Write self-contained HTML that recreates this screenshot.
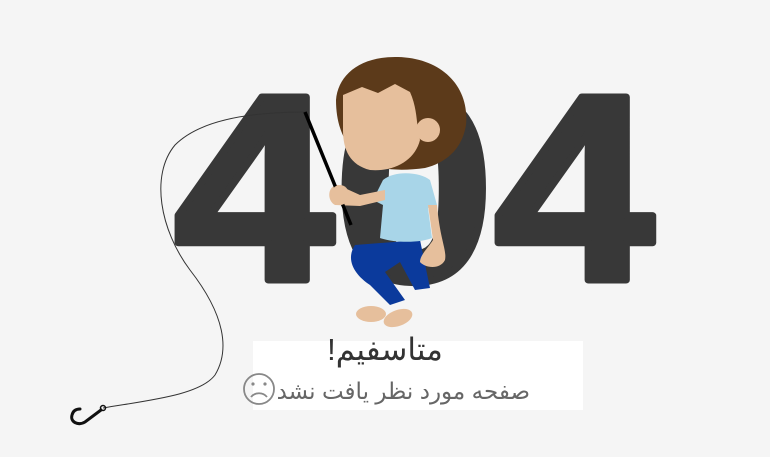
<!DOCTYPE html>
<html><head><meta charset="utf-8"><style>
html,body{margin:0;padding:0;background:#f5f5f5;width:770px;height:457px;overflow:hidden}
svg{display:block}
</style></head><body>
<svg width="770" height="457" viewBox="0 0 770 457" xmlns="http://www.w3.org/2000/svg">
<rect width="770" height="457" fill="#f5f5f5"/>
<text x="174" y="280" font-family="Liberation Sans, sans-serif" font-weight="bold" font-size="266" fill="#383838" stroke="#383838" stroke-width="7" stroke-linejoin="round" textLength="480" lengthAdjust="spacingAndGlyphs">404</text>
<!-- fishing line -->
<path d="M305,112 C250,112 200,120 175,145 C150,175 160,230 190,270 C225,315 230,350 215,375 C200,395 150,400 103,408" fill="none" stroke="#333" stroke-width="1"/>
<!-- hook -->
<circle cx="103" cy="408" r="2.5" fill="none" stroke="#111" stroke-width="1.5"/>
<path d="M101,410 L85,422 C78,426 70,422 72,415 C73,411 76,409 80,409" fill="none" stroke="#111" stroke-width="3" stroke-linecap="round"/>
<!-- legs -->
<path d="M355,245 C345,260 355,275 370,285 L390,305 L405,300 L385,272 L400,262 L415,290 L430,288 L420,240 Z" fill="#0b3a9c"/>
<ellipse cx="371" cy="314" rx="15" ry="8" fill="#e6bf9c"/>
<ellipse cx="398" cy="318" rx="15" ry="8" fill="#e6bf9c" transform="rotate(-20 398 318)"/>
<!-- shirt -->
<path d="M383,180 C395,170 420,172 430,180 L437,205 L428,208 L432,238 C420,243 395,243 380,238 L383,205 L373,200 Z" fill="#a8d5e8"/>
<!-- right arm -->
<path d="M428,205 L433,240 C428,248 420,255 420,262 C425,268 440,270 445,260 C447,250 440,240 437,205 Z" fill="#e6bf9c"/>
<!-- left arm -->
<path d="M385,190 L360,195 L338,185 C328,185 326,200 335,205 L360,206 L385,200 Z" fill="#e6bf9c"/>
<!-- head -->
<path d="M336,100 C338,75 360,56 398,57 C440,58 470,85 466,125 C462,150 445,163 425,168 C395,172 365,170 352,150 C344,140 336,125 336,100 Z" fill="#5c3a1a"/>
<path d="M343,95 L362,87 L378,93 L395,84 L410,92 C418,110 416,125 420,140 C415,160 395,172 370,170 C350,165 343,150 343,130 Z" fill="#e6bf9c"/>
<circle cx="428" cy="130" r="12" fill="#e6bf9c"/>
<!-- rod -->
<line x1="305" y1="112" x2="351" y2="225" stroke="#000" stroke-width="3.5"/>
<ellipse cx="340" cy="195" rx="9" ry="10" fill="#e6bf9c"/>
<!-- white box -->
<rect x="253" y="341" width="330" height="69" fill="#ffffff"/>
<text x="385" y="360" text-anchor="middle" font-family="Liberation Sans, 'DejaVu Sans', sans-serif" font-size="31" fill="#333" direction="rtl">متاسفیم!</text>
<text x="530" y="399" text-anchor="start" font-family="Liberation Sans, 'DejaVu Sans', sans-serif" font-size="23" fill="#666" direction="rtl">صفحه مورد نظر یافت نشد</text>
<circle cx="259" cy="389" r="15" fill="none" stroke="#888" stroke-width="1.8"/>
<circle cx="253" cy="384" r="1.6" fill="#888"/>
<circle cx="265" cy="384" r="1.6" fill="#888"/>
<path d="M251,397 C255,392 263,392 267,397" fill="none" stroke="#888" stroke-width="1.8"/>
</svg>
</body></html>
